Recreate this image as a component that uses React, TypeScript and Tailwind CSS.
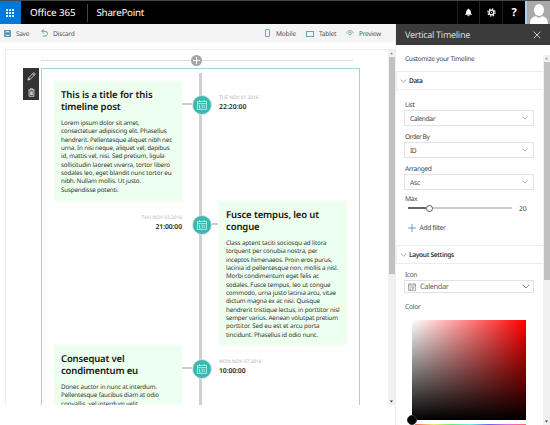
import React, { useLayoutEffect, useRef, useState } from "react";

type IconProps = { className?: string };
type Fitted = [text: string, width: number];

function CalendarIcon({ className }: IconProps) {
  return (
    <svg viewBox="0 0 10 10" className={className} fill="none" stroke="currentColor" strokeWidth="0.7">
      <path d="M.5 1.4h9v8h-9zM.5 3.600h9M2.500.2v1.600M7.500.2v1.600" />
      <path d="M2.500 5v3.200M4.200 5h1.200v3.200M7.200 5v3.200M2.500 8.100h1.200" />
    </svg>
  );
}

function Chevron({ className }: IconProps) {
  return (
    <svg viewBox="0 0 8 5" className={className} fill="none" stroke="currentColor" strokeWidth="0.8">
      <path d="M.6.6 4 4 7.4.6" />
    </svg>
  );
}

/* One line of text whose tracking is adjusted so that it spans the given width. */
function FitLine({ text, width }: { text: string; width: number }) {
  const ref = useRef<HTMLSpanElement>(null);
  const [tracking, setTracking] = useState(0);
  useLayoutEffect(() => {
    const natural = ref.current?.getBoundingClientRect().width ?? width;
    setTracking((width - natural) / text.length);
  }, [text, width]);
  return (
    <div className="whitespace-nowrap">
      <span ref={ref} style={{ letterSpacing: tracking }}>{text}</span>
    </div>
  );
}

function Lines({ lines }: { lines: Fitted[] }) {
  return <>{lines.map(([text, width]) => <FitLine key={text} text={text} width={width} />)}</>;
}

function Label({ text, width, className = "" }: { text: string; width: number; className?: string }) {
  return (
    <div className={className}>
      <FitLine text={text} width={width} />
    </div>
  );
}

type Entry = {
  title: Fitted[];
  body: Fitted[];
  date: Fitted;
  time: Fitted;
  side: "left" | "right";
  height: string;
};

const entries: Entry[] = [
  {
    side: "left",
    height: "h-[120px]",
    date: ["TUE NOV 01 2016", 39.5],
    time: ["22:20:00", 27.5],
    title: [["This is a title for this", 91.5], ["timeline post", 59.5]],
    body: [
      ["Lorem ipsum dolor sit amet,", 78.5],
      ["consectetuer adipiscing elit. Phasellus", 105.5],
      ["hendrerit. Pellentesque aliquet nibh nec", 111],
      ["urna. In nisi neque, aliquet vel, dapibus", 108.5],
      ["id, mattis vel, nisi. Sed pretium, ligula", 103.5],
      ["sollicitudin laoreet viverra, tortor libero", 109],
      ["sodales leo, eget blandit nunc tortor eu", 110.5],
      ["nibh. Nullam mollis. Ut justo.", 80],
      ["Suspendisse potenti.", 57.5],
    ],
  },
  {
    side: "right",
    height: "h-[144px]",
    date: ["THU NOV 03 2016", 40.5],
    time: ["21:00:00", 26.5],
    title: [["Fusce tempus, leo ut", 93], ["congue", 33.5]],
    body: [
      ["Class aptent taciti sociosqu ad litora", 100.5],
      ["torquent per conubia nostra, per", 91.5],
      ["inceptos himenaeos. Proin eros purus,", 106],
      ["lacinia id pellentesque non, mollis a nisl.", 112],
      ["Morbi condimentum eget felis ac", 93],
      ["sodales. Fusce tempus, leo ut congue", 104.5],
      ["commodo, urna justo lacinia arcu, vitae", 110],
      ["dictum magna ex ac nisi. Quisque", 94],
      ["hendrerit tristique lectus, in porttitor nisl", 113.5],
      ["semper varius. Aenean volutpat pretium", 112],
      ["porttitor. Sed eu est et arcu porta", 93.5],
      ["tincidunt. Phasellus id odio nunc.", 92],
    ],
  },
  {
    side: "left",
    height: "h-[120px]",
    date: ["MON NOV 07 2016", 42.5],
    time: ["10:00:00", 26.5],
    title: [["Consequat vel", 63.5], ["condimentum eu", 77]],
    body: [
      ["Donec auctor in nunc at interdum.", 96],
      ["Pellentesque faucibus diam at odio", 98],
      ["convallis, vel interdum velit", 77],
    ],
  },
];

function Card({ entry }: { entry: Entry }) {
  return (
    <div className="h-full w-[128px] bg-[#edffee] pl-[7px] pt-[8px]">
      <div className="text-[9.5px] font-semibold leading-[12px] text-[#151515]">
        <Lines lines={entry.title} />
      </div>
      <div className="mt-[6px] text-[6.25px] leading-[8.33px] text-[#333]">
        <Lines lines={entry.body} />
      </div>
    </div>
  );
}

function Stamp({ entry }: { entry: Entry }) {
  const right = entry.side === "right";
  return (
    <div className={`flex w-[128px] flex-col pt-[14px] ${right ? "items-end" : "items-start"}`}>
      <div className="text-[4.8px] leading-[7px] text-[#b4b4b4]">
        <Lines lines={[entry.date]} />
      </div>
      <div className="text-[6.8px] font-semibold leading-[9px] text-[#222]">
        <Lines lines={[entry.time]} />
      </div>
    </div>
  );
}

function Row({ entry }: { entry: Entry }) {
  const left = entry.side === "left";
  return (
    <div className={`flex shrink-0 ${entry.height}`}>
      {left ? <Card entry={entry} /> : <Stamp entry={entry} />}
      <div className="flex w-[37px] items-start pt-[14px]">
        <div className={`mt-[8px] h-[2px] w-[10px] ${left ? "bg-[#ccc]" : ""}`} />
        <div className="z-10 flex size-[20px] shrink-0 items-center justify-center rounded-full border border-[#e2e2e2] bg-[#35b9b1] text-[#dff8f5]">
          <CalendarIcon className="size-[10px]" />
        </div>
        <div className={`mt-[8px] h-[2px] w-[6px] ${left ? "" : "bg-[#ccc]"}`} />
      </div>
      {left ? <Stamp entry={entry} /> : <Card entry={entry} />}
    </div>
  );
}

function Field({ label, lw, value, vw }: { label: string; lw: number; value: string; vw: number }) {
  return (
    <div className="h-[32px]">
      <Label text={label} width={lw} className="h-[10px] pl-px text-[6.7px] leading-[9px] text-[#444]" />
      <div className="flex h-[16px] w-[130px] items-center justify-between border border-[#e2e2e2] pl-[5px] pr-[5px] text-[#444]">
        <Label text={value} width={vw} className="text-[6.7px] leading-[9px]" />
        <Chevron className="h-[4px] w-[6px] text-[#777]" />
      </div>
    </div>
  );
}

function Section({ title, width, className }: { title: string; width: number; className: string }) {
  return (
    <div className={`flex items-center border-y border-l border-[#ededed] pl-[3px] ${className}`}>
      <Chevron className="mr-[2px] h-[4px] w-[7px] text-[#777]" />
      <Label text={title} width={width} className="text-[6.6px] font-semibold leading-[9px] text-[#333]" />
    </div>
  );
}

function ScrollBar({ className, thumb }: { className: string; thumb: string }) {
  return (
    <div className={`flex w-[7px] shrink-0 flex-col items-center bg-[#f0f0f0] ${className}`}>
      <svg viewBox="0 0 7 7" className="size-[7px]" fill="#888"><path d="M2 4.200h3L3.500 2.400z" /></svg>
      <div className={`w-[6px] bg-[#c1c1c1] ${thumb}`} />
      <svg viewBox="0 0 7 7" className="mt-auto size-[7px]" fill="#333"><path d="M2 2.500h3L3.500 4.400z" /></svg>
    </div>
  );
}

function Header() {
  return (
    <header className="flex h-[24px] shrink-0 border-t border-[#484848] bg-black text-white">
      <div className="grid w-[21px] place-content-center bg-[#0078d7] pr-[2px]">
        <div className="grid grid-cols-3 gap-[1px]">
          {Array.from({ length: 9 }, (_, i) => <div key={i} className="size-[2px] bg-[#e5f3ff]" />)}
        </div>
      </div>
      <div className="flex items-center pl-[9px] text-[9.8px] leading-[14px]">
        <Label text="Office 365" width={45.5} />
        <div className="ml-[11px] mr-[9px] h-[18px] w-px bg-[#444]" />
        <Label text="SharePoint" width={47.5} />
      </div>
      <div className="ml-auto flex">
        <div className="grid w-[22px] place-content-center border-l border-[#222]">
          <svg viewBox="0 0 10 10" className="size-[9px]" fill="white"><path d="M5 .7c.7 0 1 .5 1 .9 1.700.7 1.500 2.600 1.800 4.200L9 7.500H1l1.200-1.700C2.500 4.200 2.300 2.300 4 1.600c0-.4.300-.9 1-.9M3.700 8h2.600c0 1.600-2.600 1.600-2.600 0" /></svg>
        </div>
        <div className="grid w-[23px] place-content-center border-l border-[#222]">
          <svg viewBox="0 0 10 10" className="size-[9px]" fill="none" stroke="white">
            <circle cx="5" cy="5" r="2.600" strokeWidth="1.500" />
            <circle cx="5" cy="5" r="4" strokeWidth="1.400" strokeDasharray="1.570 1.570" />
            <circle cx="5" cy="5" r=".6" fill="white" stroke="none" />
          </svg>
        </div>
        <div className="grid w-[23px] place-content-center border-l border-[#222] text-[11px] font-bold leading-none">?</div>
        <div className="w-[25px] border-l-2 border-[#acd0e4] bg-[#a9a9a9]">
          <svg viewBox="0 0 23 23" className="size-[23px]" fill="white"><ellipse cx="12" cy="9" rx="5" ry="6" /><path d="M3 23c0-6 2.500-6.500 6-8 1.500 2 4.500 2 6 0 3.500 1.500 6 2 6 8z" /></svg>
        </div>
      </div>
    </header>
  );
}

function Toolbar() {
  const text = "text-[6.6px] leading-[9px] text-[#555]";
  return (
    <div className="flex h-[18px] shrink-0 items-center bg-[#f4f4f4] pl-[4px] text-[#3c87a5]">
      <svg viewBox="0 0 8 8" className="mr-[5px] size-[7px]" fill="none" stroke="currentColor"><path d="M.5.5h7v7h-7zM2 .5v2.700h4V.5M2 7.500V5h4v2.500M1 4h6" /></svg>
      <Label text="Save" width={13} className={text} />
      <svg viewBox="0 0 8 9" className="ml-[12px] mr-[5px] h-[8px] w-[7px]" fill="none" stroke="currentColor" strokeWidth=".9"><path d="M3 .5.800 2.500 3 4.500M1 2.500h3.500c4 0 4 5.500 0 5.500H2" /></svg>
      <Label text="Discard" width={21.500} className={text} />
      <div className="ml-[190px] mr-[6.5px] h-[8px] w-[5px] rounded-[1px] border border-[#6ba2b8]" />
      <Label text="Mobile" width={20} className={text} />
      <div className="ml-[10px] mr-[5px] mt-[1px] h-[6px] w-[8px] border border-[#6ba2b8]" />
      <Label text="Tablet" width={17} className={text} />
      <svg viewBox="0 0 9 7" className="ml-[10px] mr-[5px] h-[6px] w-[8px]" fill="none" stroke="currentColor" strokeWidth=".7"><path d="M.5 4C1.500-.5 7.500-.5 8.500 4" /><circle cx="4.500" cy="4" r="1.600" /></svg>
      <Label text="Preview" width={22} className={text} />
    </div>
  );
}

function Canvas() {
  return (
    <div className="ml-[5px] mt-[7px] flex h-[356px] border-l border-t border-[#ededed]">
      <div className="flex w-[35px] shrink-0 justify-end pt-[18px]">
        <div className="mr-[2px] flex h-[32px] w-[16px] flex-col items-center justify-around bg-[#333] text-white">
          <svg viewBox="0 0 10 10" className="size-[9px]" fill="none" stroke="currentColor" strokeWidth=".8"><path d="m1 9 .700-2.500L7 1.200c.8-.8 2.500.9 1.700 1.700L3.500 8.200zM6.300 2l1.700 1.700M1.700 6.500l1.800 1.700" /></svg>
          <svg viewBox="0 0 10 10" className="size-[9px]" fill="none" stroke="currentColor" strokeWidth=".8"><path d="M1.500 2.200h7M3.800 2V.8h2.400V2M2.300 2.500v6.700h5.400V2.500M4 3.800v4M5 3.800v4M6 3.800v4" /></svg>
        </div>
      </div>
      <div className="flex w-[319px] shrink-0 flex-col pt-[5px]">
        <div className="flex h-[13px] items-start">
          <div className="mt-[5px] h-px w-[150px] bg-[#ddd]" />
          <svg viewBox="0 0 11 11" className="size-[11px]"><circle cx="5.500" cy="5.500" r="5.500" fill="#a6a6a6" /><path d="M5.500 2v7M2 5.500h7" stroke="white" strokeWidth=".9" /></svg>
          <div className="mt-[5px] h-px w-[151px] bg-[#ddd]" />
        </div>
        <div className="relative flex min-h-0 flex-1 flex-col overflow-hidden border-x border-t border-[#a9cfdf] pl-[12px] pt-[12px]">
          <div className="absolute bottom-0 left-[157px] top-[4px] w-[2.5px] bg-[#d0d0d0]" />
          {entries.map((entry) => <Row key={entry.date[0]} entry={entry} />)}
        </div>
      </div>
      <ScrollBar className="ml-auto" thumb="h-[217px]" />
    </div>
  );
}

function ColorPicker() {
  return (
    <div className="ml-[8px] w-[114px]">
      <div className="relative h-[100px]">
        <div className="h-full bg-[linear-gradient(to_top,#000,transparent),linear-gradient(to_right,#fff,#f00)]" />
        <div className="absolute -bottom-[5px] -left-[5px] size-[10px] rounded-full border border-[#333] bg-black" />
      </div>
      <div className="ml-[3px] mt-[4px] h-[5px] bg-[linear-gradient(to_right,#f66,#ee6,#6e6,#6ee,#66e,#e6e,#f66)]" />
    </div>
  );
}

function PropertyPane() {
  return (
    <aside className="flex w-[154px] shrink-0 flex-col bg-white">
      <div className="flex h-[21px] shrink-0 items-center justify-between bg-[#3b3b3b] pl-[9px] pr-[9px] text-[#ddd]">
        <Label text="Vertical Timeline" width={65} className="text-[9px] leading-[13px]" />
        <svg viewBox="0 0 8 8" className="size-[8px]" stroke="#eee" strokeWidth=".8"><path d="m.7.7 6.600 6.600M7.300.7.700 7.300" /></svg>
      </div>
      <div className="flex min-h-0 flex-1">
        <div className="w-[147px]">
          <div className="h-[26px] pl-[9px] pt-[9px]">
            <Label text="Customize your Timeline" width={69.500} className="text-[6.6px] leading-[9px] text-[#444]" />
          </div>
          <Section title="Data" width={13.500} className="h-[19px]" />
          <div className="h-[154px] pl-[8px] pt-[10px]">
            <Field label="List" lw={9.500} value="Calendar" vw={25} />
            <Field label="Order By" lw={24.500} value="ID" vw={6} />
            <Field label="Arranged" lw={26.500} value="Asc" vw={10} />
            <Label text="Max" width={12} className="-mt-[2px] pl-px text-[6.7px] leading-[9px] text-[#444]" />
            <div className="flex h-[10px] items-center pl-[2px]">
              <div className="ml-[2px] h-[2px] w-[18px] bg-[#666]" />
              <div className="size-[7px] rounded-full border border-[#555] bg-white" />
              <div className="mr-[7px] h-[2px] w-[79px] bg-[#ccc]" />
              <Label text="20" width={7.500} className="text-[6.7px] leading-[9px] text-[#444]" />
            </div>
            <div className="mt-[10px] flex items-center pl-[4px]">
              <svg viewBox="0 0 8 8" className="mr-[3.5px] size-[8px]" stroke="#3c91b4" strokeWidth=".8"><path d="M4 0v8M0 4h8" /></svg>
              <Label text="Add filter" width={26} className="text-[6.7px] leading-[9px] text-[#444]" />
            </div>
          </div>
          <Section title="Layout Settings" width={45} className="mt-[1px] h-[19px]" />
          <div className="pl-[8px] pt-[6px]">
            <Label text="Icon" width={12} className="h-[10px] pl-px text-[6.7px] leading-[9px] text-[#555]" />
            <div className="flex h-[13px] w-[130px] items-center border border-[#e2e2e2] pl-[3px] pr-[3px] text-[#666]">
              <CalendarIcon className="mr-[4px] size-[8px]" />
              <Label text="Calendar" width={28.500} className="mt-[1px] text-[7.500px] leading-[10px]" />
              <Chevron className="ml-auto h-[5px] w-[8px]" />
            </div>
            <Label text="Color" width={15.500} className="mb-[9px] mt-[9px] pl-px text-[6.7px] leading-[9px] text-[#555]" />
            <ColorPicker />
          </div>
        </div>
        <ScrollBar className="mt-[10px]" thumb="h-[218px]" />
      </div>
    </aside>
  );
}

export default function App() {
  return (
    <div className="flex h-[425px] w-[550px] flex-col overflow-hidden bg-white font-['Noto_Sans','Open_Sans',sans-serif] [text-rendering:geometricPrecision]">
      <Header />
      <div className="flex min-h-0 flex-1">
        <main className="w-[396px] border-r border-[#eee]">
          <Toolbar />
          <Canvas />
        </main>
        <PropertyPane />
      </div>
    </div>
  );
}
